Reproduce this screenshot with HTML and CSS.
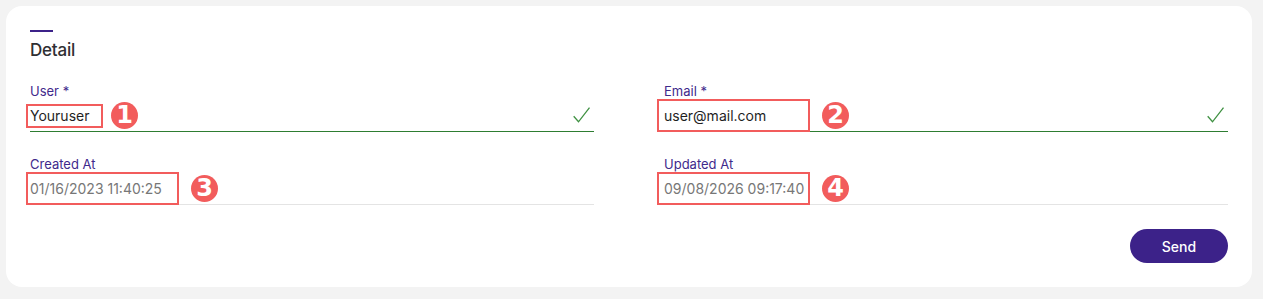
FILE: index.html
```html
<!DOCTYPE html>
<html lang="en">
<head>
<meta charset="utf-8">
<title>Detail</title>
<link rel="stylesheet" href="styles.css">
</head>
<body>
<div class="card">
  <div class="accent"></div>
  <h2 class="title">Detail</h2>
  <div class="grid">
    <div class="field">
      <label class="label">User *</label>
      <div class="input valid">
        <span class="value">Youruser</span>
        <svg class="check" width="18" height="16" viewBox="0 0 18 16"><polyline points="0.7,9.3 5.5,14.8 16.5,0.6" fill="none" stroke="#3f9142" stroke-width="1.3"/></svg>
        <span class="mark box-1"></span>
        <span class="badge badge-1">1</span>
      </div>
    </div>
    <div class="field">
      <label class="label">Email *</label>
      <div class="input valid">
        <span class="value">user@mail.com</span>
        <svg class="check" width="18" height="16" viewBox="0 0 18 16"><polyline points="0.7,9.3 5.5,14.8 16.5,0.6" fill="none" stroke="#3f9142" stroke-width="1.3"/></svg>
        <span class="mark box-2"></span>
        <span class="badge badge-2">2</span>
      </div>
    </div>
    <div class="field">
      <label class="label">Created At</label>
      <div class="input readonly">
        <span class="value">01/16/2023 11:40:25</span>
        <span class="mark box-3"></span>
        <span class="badge badge-3">3</span>
      </div>
    </div>
    <div class="field">
      <label class="label">Updated At</label>
      <div class="input readonly">
        <span class="value">09/08/2026 09:17:40</span>
        <span class="mark box-4"></span>
        <span class="badge badge-4">4</span>
      </div>
    </div>
  </div>
  <div class="actions">
    <button class="send">Send</button>
  </div>
</div>
</body>
</html>
```
FILE: styles.css
```css
* { box-sizing: border-box; }
html, body { margin: 0; }
body {
  background: #f3f3f3;
  padding: 6px 11px 14px 6px;
  font-family: Inter, "Liberation Sans", sans-serif;
}
.card {
  background: #ffffff;
  border-radius: 16px;
  padding: 24px 24px 24px 24px;
}
.accent {
  width: 23px;
  height: 2px;
  background: #3c2289;
}
.title {
  margin: 8px 0 0 0;
  font-size: 17px;
  line-height: 20px;
  font-weight: 500;
  color: #2f2f33;
  letter-spacing: -0.2px;
}
.grid {
  display: grid;
  grid-template-columns: 1fr 1fr;
  column-gap: 70px;
  row-gap: 24px;
  margin-top: 23px;
}
.field { display: flex; flex-direction: column; }
.label {
  font-size: 13px;
  line-height: 16px;
  color: #3f2a8c;
}
.input {
  position: relative;
  height: 33px;
  display: flex;
  align-items: center;
  border-bottom: 1px solid #e4e4e4;
  font-size: 14px;
}
.input.valid { border-bottom-color: #2e7d32; }
.input.valid .value { color: #1f1f1f; }
.input.readonly .value { color: #777777; }
.check {
  margin-left: auto;
  margin-right: 3px;
}
.mark {
  position: absolute;
  border: 2px solid #f25c5c;
}
.badge {
  position: absolute;
  width: 27px;
  height: 27px;
  border-radius: 50%;
  background: #f25c5c;
  color: #fff;
  font-family: "DejaVu Sans", sans-serif;
  font-weight: 900;
  font-size: 24px;
  line-height: 27px;
  text-align: center;
}
.box-1 { left: -4px; top: 5px; width: 77px; height: 24px; }
.badge-1 { left: 81px; top: 3px; }
.box-2 { left: -7px; top: 0px; width: 153px; height: 33px; }
.badge-2 { left: 158px; top: 3px; }
.box-3 { left: -4px; top: 0px; width: 153px; height: 33px; }
.badge-3 { left: 161px; top: 3px; }
.box-4 { left: -7px; top: 0px; width: 153px; height: 33px; }
.badge-4 { left: 158px; top: 3px; }
.actions {
  display: flex;
  justify-content: flex-end;
  margin-top: 24px;
}
.send {
  width: 98px;
  height: 34px;
  border: none;
  border-radius: 17px;
  background: #3c2289;
  color: #fff;
  font-family: Inter, "Liberation Sans", sans-serif;
  font-size: 14px;
  font-weight: 500;
}
```
